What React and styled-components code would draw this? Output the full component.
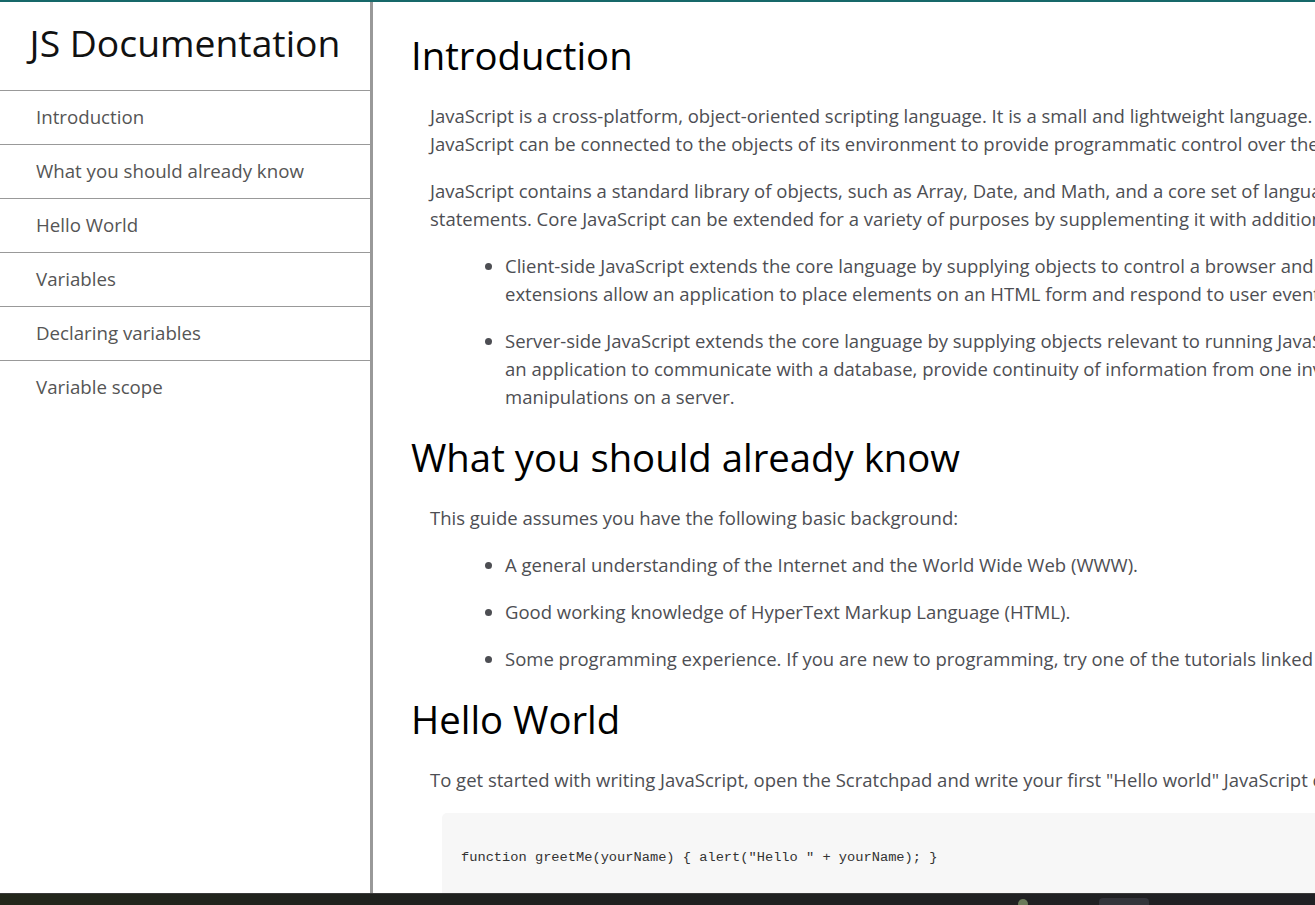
import styled, { createGlobalStyle } from "styled-components";

const Global = createGlobalStyle`
    html, body {
        margin: 0;
        padding: 0;
        overflow: hidden;
        background: #fff;
    }
    body {
        font-family: "Open Sans", "Noto Sans", sans-serif;
        border-top: 2px solid #176869;
    }
    * {
        box-sizing: border-box;
    }
`

// LAYOUT
const Pagina = styled.div`
    display: flex;
    align-items: flex-start;
    height: 903px;
`

// MENU LATERAL
const Menu = styled.nav`
    flex: 0 0 373px;
    height: 100%;
    border-right: 3px solid #999;
`

const MenuCabecalho = styled.header`
    height: 88px;
    display: flex;
    align-items: center;
    justify-content: center;
`

const MenuTitulo = styled.h1`
    margin: 0;
    font-size: 37.3px;
    font-weight: 400;
    color: #111;
    padding-bottom: 8px;
`

const MenuLista = styled.ul`
    list-style: none;
    margin: 0;
    padding: 0;
`

const MenuItem = styled.li`
    border-top: 1px solid #999;
`

const MenuLink = styled.a`
    display: block;
    height: 53px;
    line-height: 51px;
    padding-left: 36px;
    font-size: 18.7px;
    color: #555;
    text-decoration: none;
`

// CONTEUDO PRINCIPAL
const Principal = styled.main`
    flex: 0 0 1500px;
    padding: 26px 0 0 38px;
`

const Secao = styled.section`
    margin-bottom: 19px;
`

const Titulo = styled.header`
    font-size: 38.3px;
    line-height: 54px;
    color: #000;
    margin-bottom: 20px;
`

const Paragrafo = styled.p`
    font-size: 18.5px;
    line-height: 28px;
    color: #4d4e53;
    margin: 0 0 19px 19px;
    width: 1420px;
`

const Lista = styled.ul`
    margin: 0 0 0 19px;
    padding-left: 75px;
    width: 1420px;
    color: #4d4e53;
`

const ListaItem = styled.li`
    font-size: 18.5px;
    line-height: 28px;
    margin-bottom: 19px;
`

const Codigo = styled.pre`
    margin: 0 0 0 31px;
    padding: 33px 19px 30px;
    background: #f7f7f7;
    border-radius: 5px;
    width: 1300px;
    font-family: "Liberation Mono", "DejaVu Sans Mono", monospace;
    font-size: 13.7px;
    line-height: 24px;
    color: #333;
`

// BARRA DE TAREFAS (sobreposta)
const Barra = styled.div`
    position: fixed;
    left: 0;
    right: 0;
    bottom: 0;
    height: 12px;
    background: linear-gradient(90deg, #23271b 0%, #1f211e 30%, #202024 100%);
    border-top: 1px solid #3a3a3a;
`

const BarraBotao = styled.span`
    position: absolute;
    left: 1099px;
    top: 4px;
    width: 50px;
    height: 12px;
    border-radius: 4px;
    background: #33343a;
`

const BarraIcone = styled.span`
    position: absolute;
    left: 1018px;
    top: 5px;
    width: 10px;
    height: 10px;
    border-radius: 50%;
    background: #6a7a5a;
`

const secoes = [
    "Introduction",
    "What you should already know",
    "Hello World",
    "Variables",
    "Declaring variables",
    "Variable scope",
]

function App() {
    return (
        <>
            <Global />
            <Pagina>
                <Menu id="navbar">
                    <MenuCabecalho>
                        <MenuTitulo>JS Documentation</MenuTitulo>
                    </MenuCabecalho>
                    <MenuLista>
                        {secoes.map((s) => (
                            <MenuItem key={s}>
                                <MenuLink href={"#" + s.replace(/ /g, "_")}>{s}</MenuLink>
                            </MenuItem>
                        ))}
                    </MenuLista>
                </Menu>

                <Principal id="main-doc">
                    {/* INTRODUCTION */}
                    <Secao id="Introduction">
                        <Titulo>Introduction</Titulo>
                        <Paragrafo>
                            JavaScript is a cross-platform, object-oriented scripting language. It is a small and lightweight language. Inside a host environment (for example, a web browser), JavaScript can be connected to the objects of its environment to provide programmatic control over them.
                        </Paragrafo>
                        <Paragrafo>
                            JavaScript contains a standard library of objects, such as Array, Date, and Math, and a core set of language elements such as operators, control structures, and statements. Core JavaScript can be extended for a variety of purposes by supplementing it with additional objects; for example:
                        </Paragrafo>
                        <Lista>
                            <ListaItem>
                                Client-side JavaScript extends the core language by supplying objects to control a browser and its Document Object Model (DOM). For example, client-side extensions allow an application to place elements on an HTML form and respond to user events such as mouse clicks, form input, and page navigation.
                            </ListaItem>
                            <ListaItem>
                                Server-side JavaScript extends the core language by supplying objects relevant to running JavaScript on a server. For example, server-side extensions allow an application to communicate with a database, provide continuity of information from one invocation to another of the application, or perform file manipulations on a server.
                            </ListaItem>
                        </Lista>
                    </Secao>

                    {/* WHAT YOU SHOULD ALREADY KNOW */}
                    <Secao id="What_you_should_already_know">
                        <Titulo>What you should already know</Titulo>
                        <Paragrafo>This guide assumes you have the following basic background:</Paragrafo>
                        <Lista>
                            <ListaItem>A general understanding of the Internet and the World Wide Web (WWW).</ListaItem>
                            <ListaItem>Good working knowledge of HyperText Markup Language (HTML).</ListaItem>
                            <ListaItem>Some programming experience. If you are new to programming, try one of the tutorials linked on the main page about JavaScript.</ListaItem>
                        </Lista>
                    </Secao>

                    {/* HELLO WORLD */}
                    <Secao id="Hello_World">
                        <Titulo>Hello World</Titulo>
                        <Paragrafo>
                            To get started with writing JavaScript, open the Scratchpad and write your first "Hello world" JavaScript code:
                        </Paragrafo>
                        <Codigo>function greetMe(yourName) {"{"} alert("Hello " + yourName); {"}"}</Codigo>
                    </Secao>
                </Principal>
            </Pagina>
            <Barra>
                <BarraIcone />
                <BarraBotao />
            </Barra>
        </>
    )
}

export default App
